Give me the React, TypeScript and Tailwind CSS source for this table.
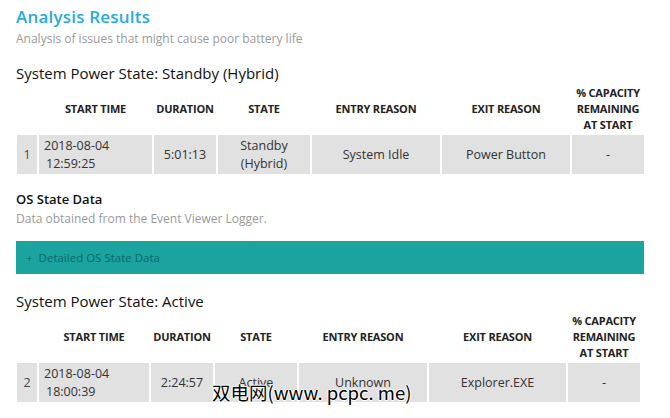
import React from "react";

type Row = {
  idx: string;
  start: [string, string];
  duration: string;
  state: React.ReactNode;
  entry: string;
  exit: string;
  cap: string;
};

function PowerTable({ row, widths }: { row: Row; widths: number[] }) {
  const cell = "bg-[#e1e1e1] text-center align-middle text-[12.5px] text-[#333] leading-[18px] p-0";
  const th = "text-center align-middle text-[11px] font-bold text-[#222] leading-[16px] px-0 whitespace-nowrap tracking-[-0.2px]";
  return (
    <table className="border-separate border-spacing-[2px] ml-[15px] table-fixed" style={{ width: widths.reduce((a, b) => a + b, 0) + 16 }}>
      <colgroup>
        {widths.map((w, i) => (
          <col key={i} style={{ width: w }} />
        ))}
      </colgroup>
      <thead>
        <tr className="h-[45px]">
          <th></th>
          <th className={th}>START TIME</th>
          <th className={th}>DURATION</th>
          <th className={th}>STATE</th>
          <th className={th}>ENTRY REASON</th>
          <th className={th}>EXIT REASON</th>
          <th className={th}>
            % CAPACITY
            <br />
            REMAINING
            <br />
            AT START
          </th>
        </tr>
      </thead>
      <tbody>
        <tr className="h-[39px]">
          <td className={cell + " text-[#444]"}>{row.idx}</td>
          <td className={cell + " text-left pl-[5px]"}>
            <div>{row.start[0]}</div>
            <div className="pl-[2px]">{row.start[1]}</div>
          </td>
          <td className={cell}>{row.duration}</td>
          <td className={cell}>{row.state}</td>
          <td className={cell}>{row.entry}</td>
          <td className={cell}>{row.exit}</td>
          <td className={cell}>{row.cap}</td>
        </tr>
      </tbody>
    </table>
  );
}

export default function App() {
  return (
    <div
      className="relative w-[670px] h-[418px] overflow-hidden bg-white"
      style={{ fontFamily: '"Open Sans", "Noto Sans", sans-serif' }}
    >
      <div className="pt-[5px]">
        <div className="pl-[16px] text-[17px] leading-[24px] text-[#27a9e1] font-semibold tracking-[0.2px]">Analysis Results</div>
        <div className="pl-[16px] text-[12px] leading-[18px] text-[#9a9a9a] mt-[1px]">
          Analysis of issues that might cause poor battery life
        </div>
        <div className="pl-[16px] mt-[15px] text-[15px] leading-[20px] text-[#111]">
          System Power State: Standby (Hybrid)
        </div>
        <PowerTable
          widths={[20, 113, 62, 92, 128, 128, 72]}
          row={{
            idx: "1",
            start: ["2018-08-04", "12:59:25"],
            duration: "5:01:13",
            state: (
              <>
                <div>Standby</div>
                <div>(Hybrid)</div>
              </>
            ),
            entry: "System Idle",
            exit: "Power Button",
            cap: "-",
          }}
        />
        <div className="pl-[16px] mt-[14px] text-[13px] leading-[18px] text-[#111] font-semibold">OS State Data</div>
        <div className="pl-[16px] text-[12px] leading-[18px] text-[#9a9a9a] mt-[2px]">
          Data obtained from the Event Viewer Logger.
        </div>
        <div className="ml-[16px] mt-[13px] w-[628px] h-[33px] bg-[#1aa39f] flex items-center pl-[10px] text-[11.5px] text-[#0d6a66]">
          <span className="mr-[6px]">+</span>
          <span>Detailed OS State Data</span>
        </div>
        <div className="pl-[16px] mt-[17px] text-[15px] leading-[20px] text-[#111]">System Power State: Active</div>
        <PowerTable
          widths={[20, 110, 62, 82, 128, 137, 72]}
          row={{
            idx: "2",
            start: ["2018-08-04", "18:00:39"],
            duration: "2:24:57",
            state: "Active",
            entry: "Unknown",
            exit: "Explorer.EXE",
            cap: "-",
          }}
        />
      </div>
      <div
        className="absolute left-[212px] top-[380px] text-[18.5px] leading-[24px] text-black"
        style={{
          fontFamily: '"Noto Sans CJK SC", "DejaVu Sans", sans-serif',
          textShadow: "1px 0 #fff, -1px 0 #fff, 0 1px #fff, 0 -1px #fff",
        }}
      >
        双电网(www. pcpc. me)
      </div>
    </div>
  );
}
